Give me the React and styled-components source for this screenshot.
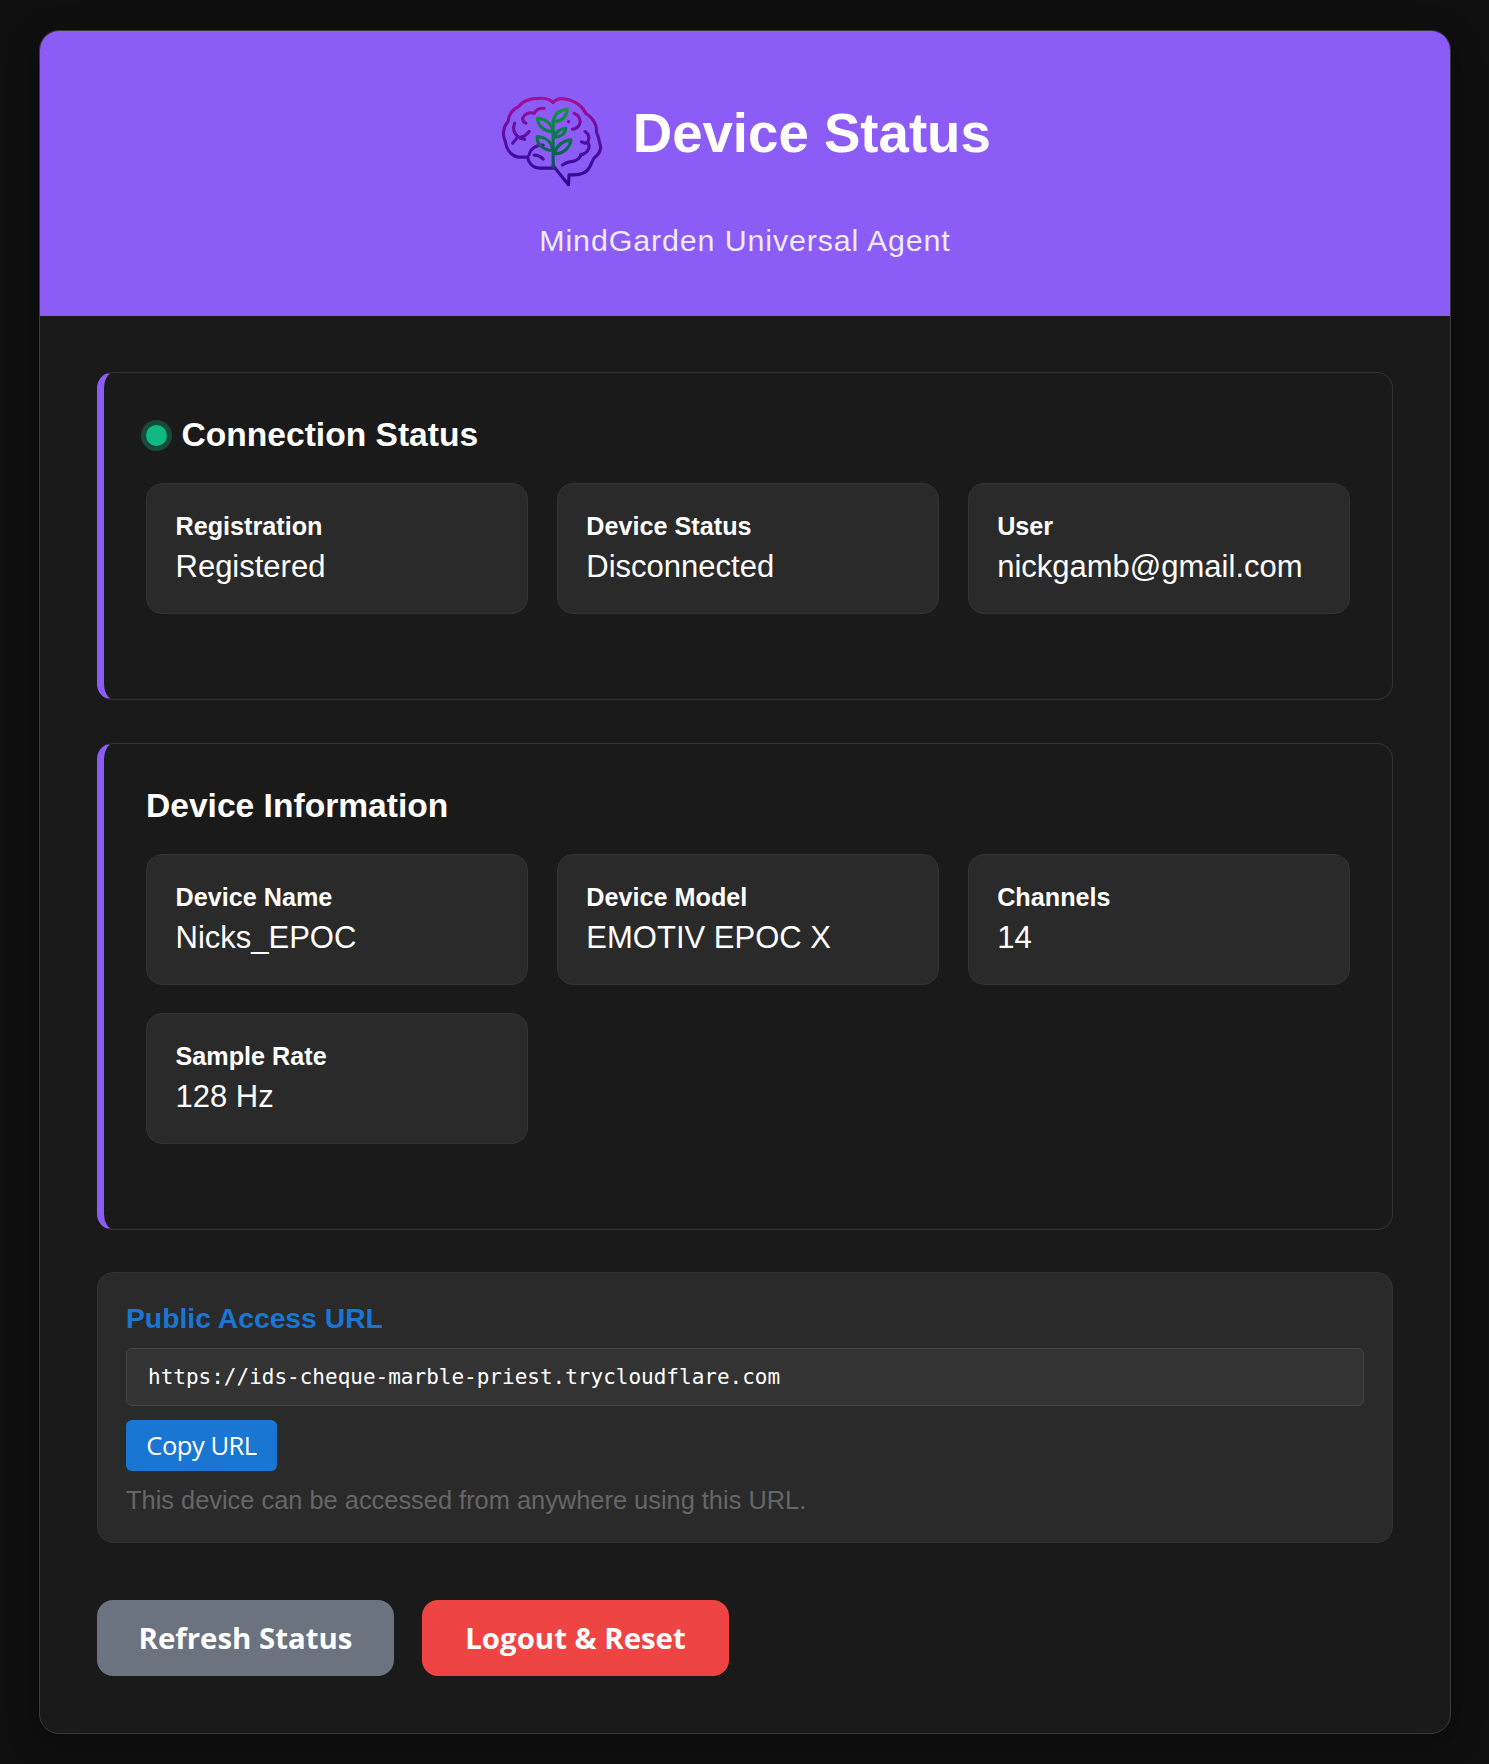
import React from "react";
import styled, { createGlobalStyle } from "styled-components";

const GlobalStyle = createGlobalStyle`
  * {
    box-sizing: border-box;
  }
  body {
    margin: 0;
    background: #0f0f0f;
    font-family: "Liberation Sans", Arial, sans-serif;
    color: #fff;
  }
`;

const Page = styled.div`
  padding: 30px 38px 31px 39px;
`;
const Container = styled.div`
  background: #1a1a1a;
  border: 1px solid #3a3a3a;
  border-radius: 20px;
  overflow: hidden;
  box-shadow: 0 8px 32px rgba(0, 0, 0, 0.3);
`;
const Header = styled.header`
  height: 285px;
  background: #8b5cf6;
  display: flex;
  flex-direction: column;
  align-items: center;
  padding-top: 56px;
`;
const TitleRow = styled.div`
  display: flex;
  align-items: flex-start;
  gap: 26.5px;
  svg {
    margin-top: 8px;
  }
`;
const Title = styled.h1`
  margin: 0;
  font-size: 54.6px;
  font-weight: 700;
  line-height: 93px;
`;
const Subtitle = styled.p`
  margin: 35px 0 0;
  font-size: 30.4px;
  line-height: 35px;
  letter-spacing: 0.88px;
  color: rgba(255, 255, 255, 0.9);
`;
const Content = styled.main`
  padding: 56px 57px 57px;
`;
const Section = styled.section`
  background: #1a1a1a;
  border: 1px solid #333;
  border-left: 7px solid #8b5cf6;
  border-radius: 16px;
  padding: 43px 42px 42px 42px;
  margin-bottom: 42.5px;
`;
const SectionTitle = styled.h2`
  margin: 0 0 29px;
  display: flex;
  align-items: center;
  font-size: 33.6px;
  font-weight: 700;
  line-height: 38px;
`;
const StatusDot = styled.span`
  width: 21px;
  height: 21px;
  margin-right: 14.5px;
  border-radius: 50%;
  background: #10b981;
  box-shadow: 0 0 0 5px rgba(16, 185, 129, 0.3);
`;
const CardGrid = styled.div`
  display: grid;
  grid-template-columns: repeat(3, 1fr);
  gap: 28px 28.5px;
  margin-bottom: 43px;
`;
const Card = styled.div`
  height: 131px;
  background: #2a2a2a;
  border: 1px solid #333;
  border-radius: 16px;
  padding: 28px 28.5px;
`;
const Label = styled.div`
  font-size: 25.2px;
  font-weight: 700;
  line-height: 29px;
  margin-bottom: 8px;
`;
const Value = styled.div`
  font-size: 31px;
  line-height: 35px;
`;
const UrlBox = styled.section`
  background: #2a2a2a;
  border: 1px solid #333;
  border-radius: 16px;
  padding: 29px 28px 27px;
`;
const UrlTitle = styled.h3`
  margin: 0 0 13.5px;
  font-size: 28.3px;
  font-weight: 700;
  line-height: 32px;
  color: #1976d2;
`;
const UrlField = styled.div`
  height: 58px;
  display: flex;
  align-items: center;
  padding: 0 21px;
  background: #333;
  border: 1px solid #444;
  border-radius: 6px;
  font-family: "DejaVu Sans Mono", monospace;
  font-size: 21px;
`;
const CopyButton = styled.button`
  display: block;
  width: 151px;
  height: 51px;
  margin-top: 14px;
  padding: 0;
  border: none;
  border-radius: 6px;
  background: #1976d2;
  color: #fff;
  font-family: "Open Sans", sans-serif;
  font-size: 25.6px;
  letter-spacing: -0.5px;
`;
const Note = styled.p`
  margin: 15px 0 0;
  font-size: 25.4px;
  line-height: 29px;
  color: #666;
`;
const Actions = styled.div`
  display: flex;
  gap: 28px;
  margin-top: 57px;
`;
const ActionButton = styled.button`
  width: ${(props) => (props.danger ? "307px" : "297px")};
  height: 76px;
  padding: 0;
  border: none;
  border-radius: 16px;
  background: ${(props) => (props.danger ? "#ef4444" : "#6b7280")};
  color: #fff;
  font-family: "Open Sans", sans-serif;
  font-size: 29.4px;
  font-weight: 700;
`;

const BrainLogo = () => (
  <svg width="107" height="93" viewBox="60 45 320 280" fill="none" strokeWidth="9.5" strokeLinecap="round" strokeLinejoin="round">
    <defs>
      <linearGradient id="brainStroke" gradientUnits="userSpaceOnUse" x1="0" y1="50" x2="0" y2="315">
        <stop offset="0" stopColor="#a80f95" />
        <stop offset="0.5" stopColor="#550ea2" />
        <stop offset="1" stopColor="#2a0a90" />
      </linearGradient>
      <linearGradient id="leafStroke" gradientUnits="userSpaceOnUse" x1="0" y1="88" x2="0" y2="260">
        <stop offset="0" stopColor="#0a9a3c" />
        <stop offset="1" stopColor="#0b4f5a" />
      </linearGradient>
    </defs>
    <g stroke="url(#brainStroke)">
      <path d="M222 258 L268 315 L270 285 C300 288 322 282 332 262 C338 250 340 242 345 235 C362 222 368 205 362 190 C360 175 356 165 352 155 C355 135 340 112 320 100 C310 78 285 60 258 57 C243 54 230 58 222 68 C212 56 195 54 178 55 C150 55 130 62 118 80 C100 88 88 105 86 125 C72 140 68 165 78 185 C80 205 92 225 115 232 L145 232" />
      <path d="M145 232 C148 250 160 264 180 265 L222 265" />
      <path d="M150 225 C152 208 170 195 192 196" />
      <path d="M165 226 C175 226 185 230 192 238" />
      <path d="M195 85 C180 84 170 90 165 100 C150 95 135 102 130 115 C130 122 134 128 140 130" />
      <path d="M106 130 C100 145 104 160 115 170 C112 178 106 184 100 190" />
      <path d="M115 170 C122 176 128 178 136 178" />
      <path d="M123 172 C132 172 142 165 150 155" />
      <path d="M285 100 C300 106 306 120 302 132 C298 142 290 147 280 148" />
      <path d="M268 125 L268.5 125.5" />
      <path d="M318 155 C328 160 332 172 328 182 C326 188 322 190 318 190 L307 186" />
      <path d="M326 188 C334 198 330 212 318 220 C312 224 308 225 304 225" />
      <path d="M308 223 C302 236 292 243 280 245 C268 246 258 250 250 256" />
    </g>
    <g stroke="url(#leafStroke)">
      <path d="M222 262 L222 125" />
      <path d="M222 125 C226 100 245 90 264 88 C264 105 252 125 222 125 Z" />
      <path d="M222 155 C216 130 198 116 175 115 C176 138 195 155 222 155 Z" />
      <path d="M225 172 C230 155 242 147 260 145 C258 162 245 172 225 172 Z" />
      <path d="M222 212 C218 188 200 172 174 170 C172 195 195 212 222 212 Z" />
      <path d="M225 222 C232 198 250 183 276 180 C272 205 252 222 225 222 Z" />
    </g>
  </svg>
);

const InfoCard = ({ label, value }) => (
  <Card>
    <Label>{label}</Label>
    <Value>{value}</Value>
  </Card>
);

const App = () => (
  <Page>
    <GlobalStyle />
    <Container>
      <Header>
        <TitleRow>
          <BrainLogo />
          <Title>Device Status</Title>
        </TitleRow>
        <Subtitle>MindGarden Universal Agent</Subtitle>
      </Header>
      <Content>
        <Section>
          <SectionTitle>
            <StatusDot />
            Connection Status
          </SectionTitle>
          <CardGrid>
            <InfoCard label="Registration" value="Registered" />
            <InfoCard label="Device Status" value="Disconnected" />
            <InfoCard label="User" value="nickgamb@gmail.com" />
          </CardGrid>
        </Section>
        <Section>
          <SectionTitle>Device Information</SectionTitle>
          <CardGrid>
            <InfoCard label="Device Name" value="Nicks_EPOC" />
            <InfoCard label="Device Model" value="EMOTIV EPOC X" />
            <InfoCard label="Channels" value="14" />
            <InfoCard label="Sample Rate" value="128 Hz" />
          </CardGrid>
        </Section>
        <UrlBox>
          <UrlTitle>Public Access URL</UrlTitle>
          <UrlField>https://ids-cheque-marble-priest.trycloudflare.com</UrlField>
          <CopyButton>Copy URL</CopyButton>
          <Note>This device can be accessed from anywhere using this URL.</Note>
        </UrlBox>
        <Actions>
          <ActionButton>Refresh Status</ActionButton>
          <ActionButton danger>Logout &amp; Reset</ActionButton>
        </Actions>
      </Content>
    </Container>
  </Page>
);

export default App;
